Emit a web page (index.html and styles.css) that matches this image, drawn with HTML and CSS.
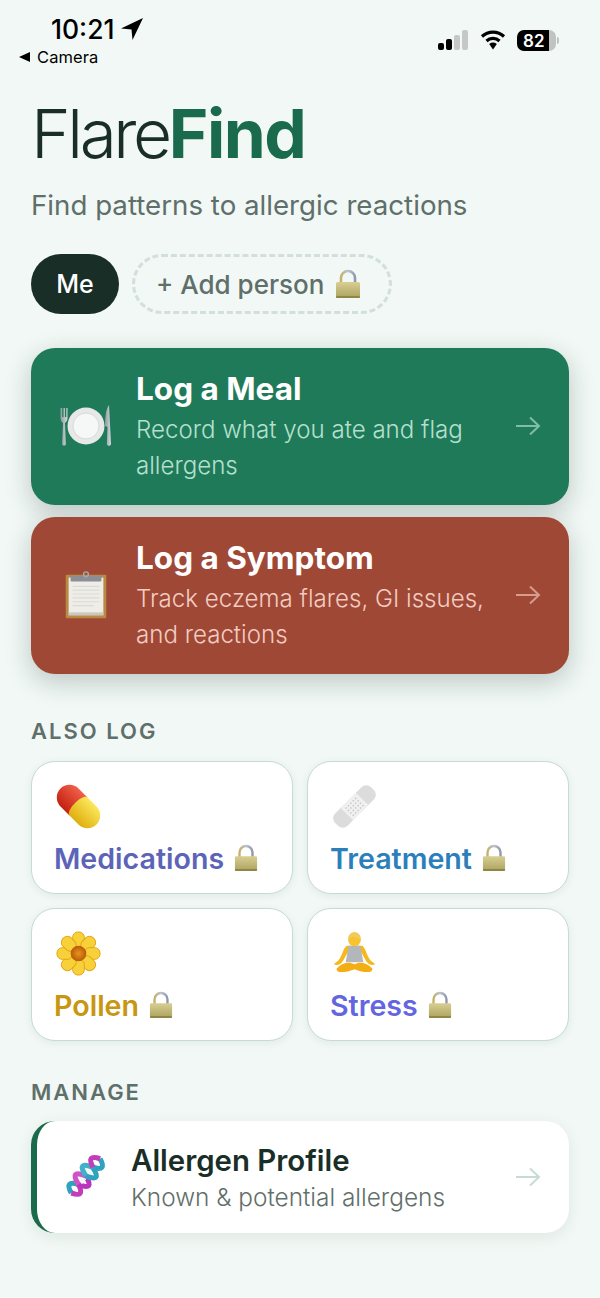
FILE: index.html
```html
<!DOCTYPE html>
<html lang="en">
<head>
    <meta charset="UTF-8">
    <meta name="viewport" content="width=device-width, initial-scale=1.0">
    <title>FlareFind</title>
    <link rel="stylesheet" href="styles.css">
</head>
<body>
    <svg class="defs" width="0" height="0" aria-hidden="true">
        <defs>
            <linearGradient id="lock-body" x1="0" y1="0" x2="0" y2="1">
                <stop offset="0" stop-color="#d8cf92"/>
                <stop offset="1" stop-color="#aca25f"/>
            </linearGradient>
            <linearGradient id="lock-shackle" x1="0" y1="0" x2="1" y2="0">
                <stop offset="0" stop-color="#c6b06a"/>
                <stop offset="0.5" stop-color="#bcc3d2"/>
                <stop offset="1" stop-color="#9097ad"/>
            </linearGradient>
            <linearGradient id="pill-red" x1="0" y1="0" x2="0" y2="1">
                <stop offset="0" stop-color="#f0604a"/>
                <stop offset="1" stop-color="#c4200f"/>
            </linearGradient>
            <linearGradient id="pill-yellow" x1="0" y1="0" x2="0" y2="1">
                <stop offset="0" stop-color="#fbe85a"/>
                <stop offset="1" stop-color="#dfae10"/>
            </linearGradient>
            <linearGradient id="steel" x1="0" y1="0" x2="1" y2="0">
                <stop offset="0" stop-color="#8f999e"/>
                <stop offset="1" stop-color="#d5dadc"/>
            </linearGradient>
            <radialGradient id="flower-core">
                <stop offset="0" stop-color="#e8941c"/>
                <stop offset="1" stop-color="#b85a08"/>
            </radialGradient>
            <symbol id="lock" viewBox="0 0 26 30">
                <path d="M6 14V9a7 7 0 0 1 14 0v5" fill="none" stroke="url(#lock-shackle)" stroke-width="2.6"/>
                <rect x="1" y="13" width="24" height="16" rx="1.5" fill="url(#lock-body)"/>
                <rect x="1" y="27" width="24" height="2" rx="1" fill="#8f8545"/>
            </symbol>
        </defs>
    </svg>

    <div class="page">
        <div class="status">
            <div class="status-left">
                <div class="clock">10:21
                    <svg class="loc" viewBox="0 0 24 24"><path d="M23 1 1 11.500l10.500 1L12.500 23z"/></svg>
                </div>
                <div class="back"><span class="back-tri"></span>Camera</div>
            </div>
            <div class="status-right">
                <div class="signal"><i class="on"></i><i class="on"></i><i></i><i></i></div>
                <svg class="wifi" viewBox="0 0 26 20">
                    <path d="M2 6.500a16 16 0 0 1 22 0M6.500 11a9.500 9.500 0 0 1 13 0" fill="none" stroke="#000" stroke-width="3.200"/>
                    <path d="M9.200 14a5.600 5.600 0 0 1 7.600 0L13 19.500z"/>
                </svg>
                <div class="battery"><span>82</span></div>
                <div class="battery-nub"></div>
            </div>
        </div>

        <h1 class="logo"><span class="logo-light">Flare</span><span class="logo-bold">Find</span></h1>
        <p class="tagline">Find patterns to allergic reactions</p>

        <div class="people">
            <button class="pill pill-me">Me</button>
            <button class="pill pill-add">+ Add person <svg class="lock lock-add"><use href="#lock"/></svg></button>
        </div>

        <a class="action action-meal">
            <svg class="action-icon" viewBox="0 0 54 50">
                <circle cx="27" cy="25" r="18.500" fill="#e6e9e8"/>
                <circle cx="27" cy="25" r="13" fill="#f6f7f7" stroke="#d8dbda"/>
                <path d="M1.500 7v10c0 3 1.500 4 2.500 5l-.8 21c0 2.200 3.600 2.200 3.600 0L6 22c1-1 2.500-2 2.500-5V7H7.300v9H6V7H4.500v9H3.200V7z" fill="url(#steel)"/>
                <path d="M50 4c-3 4-4 12-4 21l2.500 1-.6 17c0 2.400 4.100 2.400 4.100 0z" fill="url(#steel)"/>
            </svg>
            <div class="action-text">
                <div class="action-title">Log a Meal</div>
                <div class="action-desc action-desc-meal">Record what you ate and flag allergens</div>
            </div>
            <svg class="arrow arrow-meal" viewBox="0 0 26 20"><path d="M1 10h23M15 1.500l9 8.500-9 8.500"/></svg>
        </a>

        <a class="action action-symptom">
            <svg class="action-icon" viewBox="0 0 56 50">
                <rect x="7" y="4" width="42" height="45" rx="1" fill="#b98a45"/>
                <rect x="10" y="7" width="36" height="39" fill="#eeede8"/>
                <path d="M14 16h28M14 20h28M14 24h28M14 28h28M14 32h28M14 36h22" stroke="#dbdbd6" stroke-width="1.200"/>
                <rect x="10" y="43" width="36" height="3" fill="#c9c8c1"/>
                <rect x="12" y="5" width="32" height="6" rx="1" fill="#8b8f93"/>
                <circle cx="28" cy="3.500" r="2.500" fill="none" stroke="#a5a9ad" stroke-width="1.500"/>
            </svg>
            <div class="action-text">
                <div class="action-title">Log a Symptom</div>
                <div class="action-desc action-desc-symptom">Track eczema flares, GI issues, and reactions</div>
            </div>
            <svg class="arrow arrow-symptom" viewBox="0 0 26 20"><path d="M1 10h23M15 1.500l9 8.500-9 8.500"/></svg>
        </a>

        <div class="section-label section-also">ALSO LOG</div>
        <div class="log-grid">
            <a class="log-card">
                <svg class="log-icon" viewBox="0 0 46 46">
                    <g transform="rotate(45 23 23)">
                        <path d="M23 10H10a13 13 0 0 0 0 26h13z" fill="url(#pill-red)"/>
                        <path d="M23 10c-3 0-5 6-5 13s2 13 5 13h13a13 13 0 0 0 0-26z" fill="url(#pill-yellow)"/>
                    </g>
                </svg>
                <div class="log-name name-med">Medications <svg class="lock"><use href="#lock"/></svg></div>
            </a>
            <a class="log-card">
                <svg class="log-icon" viewBox="0 0 46 46">
                    <g transform="rotate(-45 23 23)">
                        <rect x="-3" y="14" width="52" height="18" rx="7" fill="#dcdcdc"/>
                        <rect x="12" y="14" width="22" height="18" fill="#f0f0f0"/>
                        <path d="M15 18h16M15 21.500h16M15 25h16M15 28.500h16" stroke="#c6c6c6" stroke-width="1.400" stroke-dasharray="1.500 2"/>
                    </g>
                </svg>
                <div class="log-name name-treat">Treatment <svg class="lock"><use href="#lock"/></svg></div>
            </a>
            <a class="log-card">
                <svg class="log-icon" viewBox="0 0 46 46">
                    <g fill="#f8d03a" stroke="#e2a612" stroke-width="1">
                        <rect x="17" y="1" width="12" height="16" rx="5.500"/>
                        <rect x="17" y="1" width="12" height="16" rx="5.500" transform="rotate(45 23 23)"/>
                        <rect x="17" y="1" width="12" height="16" rx="5.500" transform="rotate(90 23 23)"/>
                        <rect x="17" y="1" width="12" height="16" rx="5.500" transform="rotate(135 23 23)"/>
                        <rect x="17" y="1" width="12" height="16" rx="5.500" transform="rotate(180 23 23)"/>
                        <rect x="17" y="1" width="12" height="16" rx="5.500" transform="rotate(225 23 23)"/>
                        <rect x="17" y="1" width="12" height="16" rx="5.500" transform="rotate(270 23 23)"/>
                        <rect x="17" y="1" width="12" height="16" rx="5.500" transform="rotate(315 23 23)"/>
                    </g>
                    <circle cx="23" cy="23" r="8" fill="url(#flower-core)"/>
                </svg>
                <div class="log-name name-pollen">Pollen <svg class="lock"><use href="#lock"/></svg></div>
            </a>
            <a class="log-card">
                <svg class="log-icon" viewBox="0 0 46 46">
                    <path d="M15 15c-3 2-4 8-7 13-1.500 3-5 4-6 6 3 2 7 0 9-3l5-9h14l5 9c2 3 6 5 9 3-1-2-4.500-3-6-6-3-5-4-11-7-13z" fill="#f5b91e"/>
                    <path d="M17 15h12l3 17H14z" fill="#b3b6bb"/>
                    <path d="M5 38c6-6 13-7 18-4 5-3 12-2 18 4 1 2-1 4-4 4-5 0-9-1-14-3-5 2-9 3-14 3-3 0-5-2-4-4z" fill="#f2ae14"/>
                    <circle cx="23" cy="9" r="6.500" fill="#f7c32e"/>
                    <path d="M16.500 8c0-4 3-7 6.500-7s6.500 3 6.500 7c-3 0-6-1-8-3-1 2-3 3-5 3z" fill="#f0ca5c"/>
                </svg>
                <div class="log-name name-stress">Stress <svg class="lock"><use href="#lock"/></svg></div>
            </a>
        </div>

        <div class="section-label section-manage">MANAGE</div>
        <a class="profile">
            <svg class="profile-icon" viewBox="0 0 46 50">
                <g transform="translate(23 25) rotate(-50) scale(.86) translate(-23 -25)" fill="none">
                    <path d="M-3 23Q3 7 10 23" stroke="#2fa3bd" stroke-width="6"/>
                    <path d="M-3 23Q3 39 10 23" stroke="#c33db8" stroke-width="6"/>
                    <path d="M10 23Q16.500 43 23 23" stroke="#b935c0" stroke-width="6"/>
                    <path d="M14 20v6M17 19v8M20 20v6M26 20v6M29 19v8M32 20v6" stroke="#eef3f6" stroke-width="2"/>
                    <path d="M10 23Q16.500 3 23 23" stroke="#d052c6" stroke-width="6"/>
                    <path d="M23 23Q29.500 43 36 23" stroke="#2fa3bd" stroke-width="6"/>
                    <path d="M23 23Q29.500 3 36 23" stroke="#3db2c9" stroke-width="6"/>
                    <path d="M36 23Q43 39 49 23" stroke="#2fa3bd" stroke-width="6"/>
                    <path d="M36 23Q43 7 49 23" stroke="#c33db8" stroke-width="6"/>
                </g>
            </svg>
            <div class="profile-text">
                <div class="profile-title">Allergen Profile</div>
                <div class="profile-desc">Known &amp; potential allergens</div>
            </div>
            <svg class="arrow arrow-profile" viewBox="0 0 26 20"><path d="M1 10h23M15 1.500l9 8.500-9 8.500"/></svg>
        </a>
    </div>
</body>
</html>
```

FILE: styles.css
```css
* {
    box-sizing: border-box;
}
body {
    margin: 0;
    background-color: #f1f8f5;
    color: #1a2e28;
    font-family: Inter, "Liberation Sans", sans-serif;
}
.defs {
    display: block;
    height: 0;
}
.page {
    height: 1298px;
    padding: 0 31px;
    overflow: hidden;
}

/* status bar */
.status {
    display: flex;
    justify-content: space-between;
    margin: 0 -31px;
    height: 70px;
    color: #000;
}
.status-left {
    padding: 14px 0 0 19px;
}
.clock {
    display: flex;
    align-items: center;
    gap: 6px;
    margin-left: 32px;
    font-size: 26.500px;
    font-weight: 500;
    line-height: 30px;
}
.loc {
    width: 24px;
    height: 24px;
}
.back {
    display: flex;
    align-items: center;
    gap: 7px;
    margin-top: 3px;
    font-size: 16.500px;
    font-weight: 400;
    letter-spacing: 0.1px;
    line-height: 20px;
}
.back-tri {
    border-top: 5px solid transparent;
    border-bottom: 5px solid transparent;
    border-right: 11px solid #000;
}
.status-right {
    display: flex;
    align-items: flex-start;
    padding: 30px 41px 0 0;
}
.signal {
    display: flex;
    align-items: flex-end;
    gap: 2px;
    height: 20px;
    margin-right: 12px;
}
.signal i {
    width: 6px;
    border-radius: 2px;
    background: #c4c8c7;
}
.signal i:nth-child(1) { height: 7px; }
.signal i:nth-child(2) { height: 11px; }
.signal i:nth-child(3) { height: 15px; }
.signal i:nth-child(4) { height: 20px; }
.signal .on {
    background: #000;
}
.wifi {
    width: 26px;
    height: 20px;
    margin-right: 11px;
}
.battery {
    display: flex;
    align-items: center;
    width: 39px;
    height: 21px;
    padding-left: 6px;
    border-radius: 7px;
    background: linear-gradient(90deg, #000 82%, #bfc3c2 82%);
    color: #fff;
    font-size: 17px;
    font-weight: 600;
}
.battery-nub {
    width: 2px;
    height: 7px;
    margin-top: 7px;
    margin-left: 1px;
    border-radius: 0 2px 2px 0;
    background: #bfc3c2;
}

/* header */
.logo {
    margin: 29px 0 0;
    font-size: 67.500px;
    line-height: 70px;
    font-weight: 300;
    letter-spacing: -3.400px;
    color: #1a2e28;
}
.logo-bold {
    font-weight: 700;
    letter-spacing: -1.500px;
    color: #1a6b4e;
}
.tagline {
    margin: 18px 0 0;
    font-size: 27.700px;
    line-height: 36px;
    font-weight: 400;
    color: #5f6f6a;
}
.people {
    display: flex;
    gap: 13px;
    margin-top: 31px;
}
.pill {
    height: 60px;
    border-radius: 30px;
    font-family: inherit;
    font-size: 25px;
    font-weight: 500;
}
.pill-me {
    width: 88px;
    border: none;
    background: #1a2e28;
    color: #fff;
}
.pill-add {
    display: flex;
    align-items: center;
    gap: 11px;
    width: 260px;
    padding: 0 0 0 21px;
    border: 3px dashed #d3dfda;
    background: transparent;
    color: #5f6f6a;
    font-size: 26px;
}
.lock {
    width: 24px;
    height: 28px;
    margin-left: 3px;
    vertical-align: -3px;
}
.lock-add {
    width: 26px;
    height: 30px;
    margin-left: 0;
}

/* main actions */
.action {
    display: flex;
    align-items: center;
    height: 156.500px;
    padding: 0 28px 0 28px;
    border-radius: 24px;
    color: #fff;
    box-shadow: 0 8px 26px rgba(26, 46, 40, 0.24);
}
.action-meal {
    margin-top: 34px;
    background: #1f7a59;
}
.action-symptom {
    margin-top: 12.500px;
    background: #a04836;
}
.action-icon {
    flex: none;
    width: 54px;
    height: 50px;
}
.action-text {
    flex: 1;
    margin-left: 23px;
    padding-top: 1px;
}
.action-title {
    font-size: 31.500px;
    line-height: 38px;
    font-weight: 700;
}
.action-desc {
    margin-top: 4px;
    width: 356px;
    font-size: 24.100px;
    line-height: 36px;
    font-weight: 300;
}
.action-desc-meal {
    color: #b5e0cf;
}
.action-desc-symptom {
    color: #f2ccc1;
}
.arrow {
    flex: none;
    width: 26px;
    height: 20px;
    fill: none;
    stroke-width: 2;
}
.arrow-meal {
    stroke: #84bda6;
}
.arrow-symptom {
    stroke: #d69c8c;
}
.arrow-profile {
    stroke: #c5dcd4;
}

/* secondary logs */
.section-label {
    font-size: 22px;
    line-height: 26px;
    font-weight: 600;
    letter-spacing: 2px;
    color: #5f6f6a;
}
.section-also {
    margin-top: 44.500px;
}
.section-manage {
    margin-top: 38px;
}
.log-grid {
    display: grid;
    grid-template-columns: 1fr 1fr;
    gap: 14px;
    margin-top: 17px;
}
.log-card {
    display: block;
    height: 133px;
    padding: 22px 22px 0;
    border: 1.500px solid #c5dcd4;
    border-radius: 24px;
    background: #fff;
    box-shadow: 0 2px 8px rgba(26, 46, 40, 0.07);
}
.log-icon {
    display: block;
    width: 45px;
    height: 45px;
    margin-left: 2px;
}
.log-name {
    margin-top: 12px;
    font-size: 28.600px;
    line-height: 36px;
    font-weight: 600;
}
.name-med { color: #5c64b8; }
.name-treat { color: #2b7fbb; }
.name-pollen { color: #c8960f; }
.name-stress { color: #6366e0; }

/* manage */
.profile {
    display: flex;
    align-items: center;
    height: 112px;
    margin-top: 16px;
    padding: 0 28px 0 22px;
    border-left: 6px solid #1a6b4e;
    border-radius: 24px;
    background: #fff;
    box-shadow: 0 4px 16px rgba(26, 46, 40, 0.08);
}
.profile-icon {
    flex: none;
    width: 46px;
    height: 50px;
    margin-left: 5px;
}
.profile-text {
    flex: 1;
    margin-left: 21px;
    padding-top: 3px;
}
.profile-title {
    font-size: 29.400px;
    line-height: 36px;
    font-weight: 600;
    color: #1a2e28;
}
.profile-desc {
    margin-top: 1px;
    font-size: 24.400px;
    line-height: 34px;
    font-weight: 300;
    color: #5f6f6a;
}
```
